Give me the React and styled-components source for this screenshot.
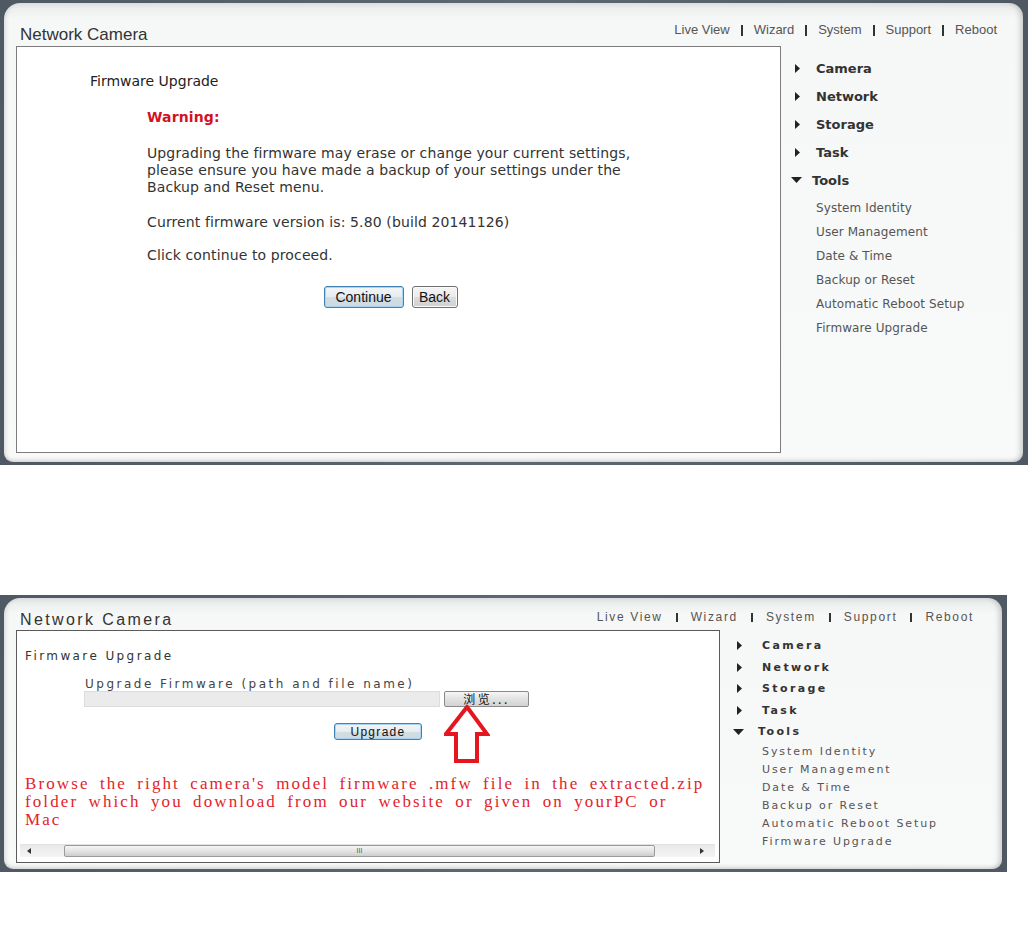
import React from 'react'
import styled, { createGlobalStyle } from 'styled-components'

const GlobalStyle = createGlobalStyle`
  html, body {
    margin: 0;
    padding: 0;
    background: #ffffff;
  }
  * {
    box-sizing: border-box;
  }
`

const Page = styled.div`
  display: flex;
  flex-direction: column;
  align-items: flex-start;
  min-height: 925px;
  background: #fff;
`

const Frame = styled.div`
  width: ${props => props.$width}px;
  height: ${props => props.$height}px;
  margin-top: ${props => props.$top || 0}px;
  background: linear-gradient(to right, #4f5963, #5d6771 50%, #4f5963);
  padding: 3px 5px 3px 4px;
`

const Inner = styled.div`
  height: 100%;
  display: flex;
  flex-direction: column;
  border-radius: 16px 14px 9px 9px;
  background: linear-gradient(to bottom, #dcdedf 0px, #eef0f0 6px, #f6f7f7 16px, #f8f9f9 100%);
  box-shadow: inset -7px 0 6px -5px rgba(0, 0, 0, 0.22), inset 6px 0 5px -5px rgba(0, 0, 0, 0.15),
    inset 0 -6px 5px -5px rgba(0, 0, 0, 0.2);
`

const Header = styled.div`
  display: flex;
  justify-content: space-between;
  align-items: flex-end;
  height: ${props => (props.$compact ? 32 : 43)}px;
  padding: ${props => (props.$compact ? '0 28px 0 16px' : '0 26px 0 16px')};
`

const Title = styled.div`
  font-family: 'Liberation Sans', Arial, sans-serif;
  font-size: ${props => (props.$compact ? 16 : 17)}px;
  letter-spacing: ${props => (props.$compact ? 2.4 : 0)}px;
  line-height: ${props => (props.$compact ? 18 : 20)}px;
  margin-bottom: ${props => (props.$compact ? 1 : 1)}px;
  color: #333;
`

const Nav = styled.div`
  display: flex;
  align-items: center;
  font-family: 'Liberation Sans', Arial, sans-serif;
  font-size: ${props => (props.$compact ? 12 : 13)}px;
  letter-spacing: ${props => (props.$compact ? 1.65 : 0)}px;
  line-height: 16px;
  margin-bottom: ${props => (props.$compact ? 5 : 8)}px;
  color: #555;
`

const NavLink = styled.span`
  color: #555;
`

const NavSep = styled.span`
  display: inline-block;
  width: 2px;
  height: ${props => (props.$compact ? 9 : 11)}px;
  background: #333;
  margin: 0 ${props => (props.$compact ? 13 : 11)}px;
`

const Body = styled.div`
  flex: 1;
  display: flex;
  padding: ${props => (props.$compact ? '0 0 6px 12px' : '0 0 9px 12px')};
`

const ContentBox = styled.div`
  position: relative;
  width: ${props => props.$width}px;
  height: 100%;
  background: #fff;
  border: 1px solid ${props => (props.$compact ? '#5a5a5a' : '#7c7c7c')};
  display: flex;
  flex-direction: column;
`

const Sidebar = styled.div`
  flex: 1;
  padding: ${props => (props.$compact ? '5px 0 0 17px' : '8px 0 0 14px')};
  font-family: 'DejaVu Sans', Verdana, sans-serif;
`

const MenuItem = styled.div`
  display: flex;
  align-items: center;
  height: ${props => (props.$compact ? 21.5 : 28)}px;
  font-weight: bold;
  font-size: ${props => (props.$compact ? 11 : 13)}px;
  letter-spacing: ${props => (props.$compact ? 2.4 : 0)}px;
  color: #333;
`

const Caret = styled.span`
  display: inline-flex;
  width: ${props => (props.$compact ? 25 : 21)}px;
  margin-left: ${props => (props.$open ? -4 : 0)}px;
`

const SubList = styled.div`
  padding-top: ${props => (props.$compact ? 0 : 2)}px;
`

const SubItem = styled.div`
  height: ${props => (props.$compact ? 18.2 : 24)}px;
  line-height: ${props => (props.$compact ? 18.2 : 24)}px;
  padding-left: ${props => (props.$compact ? 25 : 21)}px;
  font-size: ${props => (props.$compact ? 11 : 12)}px;
  letter-spacing: ${props => (props.$compact ? 1.9 : 0.1)}px;
  color: #555;
`

const Arrow = ({ open }) =>
  open ? (
    <svg width="11" height="6" viewBox="0 0 11 6">
      <polygon points="0,0 11,0 5.5,6" fill="#222" />
    </svg>
  ) : (
    <svg width="5" height="9" viewBox="0 0 5 9">
      <polygon points="0,0 5,4.5 0,9" fill="#222" />
    </svg>
  )

const menu = ['Camera', 'Network', 'Storage', 'Task']
const tools = [
  'System Identity',
  'User Management',
  'Date & Time',
  'Backup or Reset',
  'Automatic Reboot Setup',
  'Firmware Upgrade',
]
const links = ['Live View', 'Wizard', 'System', 'Support', 'Reboot']

const Menu = ({ compact }) => (
  <Sidebar $compact={compact}>
    {menu.map(m => (
      <MenuItem key={m} $compact={compact}>
        <Caret $compact={compact}>
          <Arrow />
        </Caret>
        {m}
      </MenuItem>
    ))}
    <MenuItem $compact={compact}>
      <Caret $compact={compact} $open>
        <Arrow open />
      </Caret>
      Tools
    </MenuItem>
    <SubList $compact={compact}>
      {tools.map(t => (
        <SubItem key={t} $compact={compact}>
          {t}
        </SubItem>
      ))}
    </SubList>
  </Sidebar>
)

const TopBar = ({ compact }) => (
  <Header $compact={compact}>
    <Title $compact={compact}>Network Camera</Title>
    <Nav $compact={compact}>
      {links.map((l, i) => (
        <React.Fragment key={l}>
          {i > 0 && <NavSep $compact={compact} />}
          <NavLink>{l}</NavLink>
        </React.Fragment>
      ))}
    </Nav>
  </Header>
)

/* ---------- top screen ---------- */

const WarnContent = styled.div`
  padding: 25px 0 0 73px;
  font-family: 'DejaVu Sans', Verdana, sans-serif;
  font-size: 14px;
  line-height: 17px;
  color: #333;
`

const PageHeading = styled.div`
  line-height: 18px;
  color: #222;
`

const Indented = styled.div`
  width: 487px;
  margin: 19px 0 0 57px;
`

const Para = styled.p`
  margin: 0 0 ${props => props.$after ?? 18}px 0;
  letter-spacing: 0.12px;
  color: ${props => (props.$warn ? '#d3121f' : '#333')};
  font-weight: ${props => (props.$warn ? 'bold' : 'normal')};
`

const ButtonRow = styled.div`
  display: flex;
  justify-content: center;
  gap: 8px;
  margin-top: 22px;
`

const Button = styled.button`
  height: ${props => props.$h}px;
  width: ${props => props.$w}px;
  padding: 0;
  font-family: 'Liberation Sans', Arial, sans-serif;
  font-size: ${props => props.$size || 14}px;
  letter-spacing: ${props => props.$ls || 0}px;
  color: #111;
  border-radius: 3px;
  border: 1px solid ${props => (props.$focus ? '#3f83b5' : '#707070')};
  background: ${props =>
    props.$focus
      ? 'linear-gradient(to bottom, #f3f6f8 0%, #e6ecf0 50%, #d3dde4 51%, #cfd9e0 100%)'
      : 'linear-gradient(to bottom, #f4f4f4 0%, #ebebeb 50%, #dddddd 51%, #d0d0d0 100%)'};
  box-shadow: ${props => (props.$focus ? 'inset 0 0 0 1px #a8d4f2' : 'inset 0 0 0 1px #fbfbfb')};
`

/* ---------- bottom screen ---------- */

const UploadContent = styled.div`
  flex: 1;
  padding: 17px 0 0 8px;
  font-family: 'DejaVu Sans', Verdana, sans-serif;
  font-size: 12px;
  letter-spacing: 2.4px;
  color: #333;
`

const SmallHeading = styled.div`
  line-height: 16px;
`

const FieldLabel = styled.div`
  margin: 13px 0 0 60px;
  line-height: 14px;
  letter-spacing: 2.5px;
  color: #444;
`

const FieldRow = styled.div`
  display: flex;
  gap: 4px;
  margin-left: 59px;
`

const FileInput = styled.div`
  width: 356px;
  height: 16px;
  background: #ebebeb;
  border: 1px solid #dcdcdc;
`

const BrowseButton = styled.div`
  width: 85px;
  height: 16px;
  display: flex;
  align-items: center;
  justify-content: center;
  font-family: 'Noto Sans CJK SC', 'DejaVu Sans', sans-serif;
  font-size: 12px;
  line-height: 14px;
  letter-spacing: 2.5px;
  color: #111;
  border: 1px solid #8a8a8a;
  border-radius: 2px;
  background: linear-gradient(to bottom, #f6f6f6, #e2e2e2 50%, #d2d2d2);
`

const UpgradeRow = styled.div`
  margin: 16px 0 0 309px;
`

const Note = styled.p`
  margin: 35px 0 0 0;
  font-family: 'Liberation Serif', 'Times New Roman', serif;
  font-size: 17px;
  line-height: 18px;
  letter-spacing: 2.1px;
  word-spacing: 4px;
  white-space: nowrap;
  color: #e3232b;
`

const Callout = styled.svg`
  position: absolute;
  left: 427px;
  top: 74px;
`

const ScrollBar = styled.div`
  display: flex;
  align-items: center;
  height: 13px;
  margin: 0 4px 5px 3px;
  background: linear-gradient(to bottom, #e9e9e9, #f4f4f4);
  border-top: 1px solid #e2e2e2;
`

const ScrollArrow = styled.div`
  width: ${props => props.$w}px;
  height: 100%;
  display: flex;
  align-items: center;
  justify-content: ${props => (props.$right ? 'flex-end' : 'flex-start')};
  padding: ${props => (props.$right ? '0 6px 0 0' : '0 0 0 7px')};
`

const Thumb = styled.div`
  width: 591px;
  height: 12px;
  display: flex;
  align-items: center;
  justify-content: center;
  border: 1px solid #9a9a9a;
  border-radius: 2px;
  background: linear-gradient(to bottom, #f5f5f5, #e4e4e4 50%, #cdcdcd);
  font-family: 'Liberation Sans', Arial, sans-serif;
  font-size: 7px;
  line-height: 8px;
  color: #555;
`

const Upload = () => (
  <>
    <UploadContent>
      <SmallHeading>Firmware Upgrade</SmallHeading>
      <FieldLabel>Upgrade Firmware (path and file name)</FieldLabel>
      <FieldRow>
        <FileInput />
        <BrowseButton>浏览...</BrowseButton>
      </FieldRow>
      <UpgradeRow>
        <Button $focus $w={88} $h={17} $size={12} $ls={1.3}>
          Upgrade
        </Button>
      </UpgradeRow>
      <Note>
        Browse the right camera's model firmware .mfw file in the extracted.zip
        <br />
        folder which you download from our website or given on yourPC or
        <br />
        Mac
      </Note>
    </UploadContent>
    <Callout width="46" height="58" viewBox="0 0 46 58">
      <polygon
        points="23,2 43,29 33,29 33,56 12,56 12,29 2,29"
        fill="#fff"
        stroke="#e4161f"
        strokeWidth="4"
        strokeLinejoin="miter"
      />
    </Callout>
    <ScrollBar>
      <ScrollArrow $w={44}>
        <svg width="4" height="6" viewBox="0 0 4 6">
          <polygon points="4,0 0,3 4,6" fill="#333" />
        </svg>
      </ScrollArrow>
      <Thumb>III</Thumb>
      <ScrollArrow $w={55} $right>
        <svg width="4" height="6" viewBox="0 0 4 6">
          <polygon points="0,0 4,3 0,6" fill="#333" />
        </svg>
      </ScrollArrow>
    </ScrollBar>
  </>
)

const Warning = () => (
  <WarnContent>
    <PageHeading>Firmware Upgrade</PageHeading>
    <Indented>
      <Para $warn $after={19}>
        Warning:
      </Para>
      <Para $after={18}>
        Upgrading the firmware may erase or change your current settings, please ensure you have made a backup of
        your settings under the Backup and Reset menu.
      </Para>
      <Para $after={16}>Current firmware version is: 5.80 (build 20141126)</Para>
      <Para $after={0}>Click continue to proceed.</Para>
      <ButtonRow>
        <Button $focus $w={80} $h={22}>
          Continue
        </Button>
        <Button $w={46} $h={22}>
          Back
        </Button>
      </ButtonRow>
    </Indented>
  </WarnContent>
)

const App = () => (
  <Page>
    <GlobalStyle />
    <Frame $width={1028} $height={465}>
      <Inner>
        <TopBar />
        <Body>
          <ContentBox $width={765}>
            <Warning />
          </ContentBox>
          <Menu />
        </Body>
      </Inner>
    </Frame>

    <Frame $width={1007} $height={277} $top={130}>
      <Inner>
        <TopBar compact />
        <Body $compact>
          <ContentBox $width={704} $compact>
            <Upload />
          </ContentBox>
          <Menu compact />
        </Body>
      </Inner>
    </Frame>
  </Page>
)

export default App
